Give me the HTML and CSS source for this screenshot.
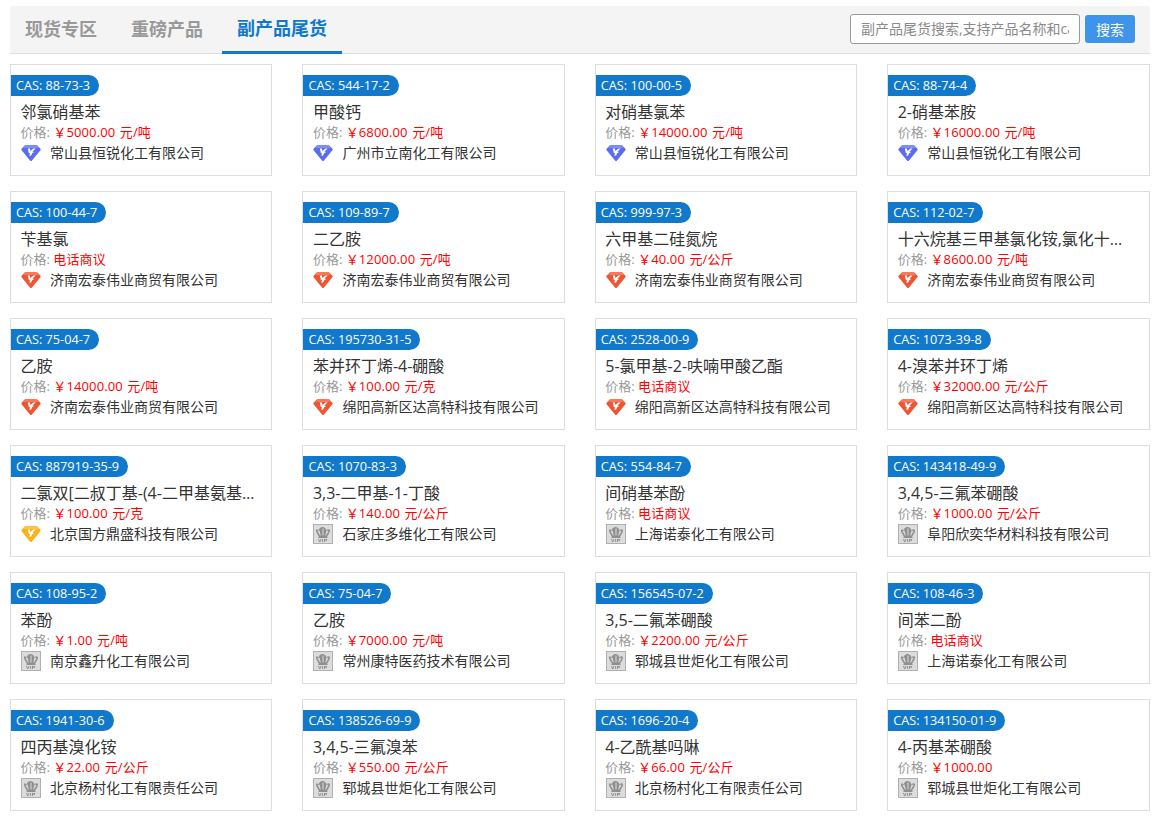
FILE: index.html
```html
<!DOCTYPE html>
<html lang="zh-CN">
<head>
<meta charset="utf-8">
<title>副产品尾货</title>
<link rel="stylesheet" href="styles.css">
</head>
<body>
<svg class="defs" width="0" height="0" aria-hidden="true">
  <symbol id="gem" viewBox="0 0 20 17">
    <path fill="currentColor" d="M4.600 .5h10.800q.6 0 1 .4l3 3.400q.6.8 0 1.500L11 15.900q-1 1-2 0L.6 5.800q-.6-.7 0-1.500l3-3.400q.4-.4 1-.4z"/>
    <path fill="#fff" opacity=".22" d="M4.300 .5h11.400L18 3.500H2z"/>
    <path fill="#fff" d="M6.800 4h2.100l.5 2.600L12.400 4h2.300l-3.300 3 1.900.6-2 .9-1.300 2.700H8.400l.6-2.900-1.100.4z"/>
  </symbol>
  <symbol id="vip" viewBox="0 0 20 20">
    <rect x=".5" y=".5" width="19" height="19" fill="#dcdcdc" stroke="#b0b0b0"/>
    <path fill="#8f8f8f" d="M3.500 5.500q-1.300 1 0 3l2.500 4.500h8l2.500-4.500q1.300-2 0-3-1.500-.8-3 .8-.9-2.800-3.500-3.300h-1q-2.600.5-3.500 3.300-1.500-1.600-3-.8z"/>
    <path fill="#dcdcdc" d="M4.500 7 7 11.500h.8L6.500 6.500zM9.500 4.500h1v7h-1zM15.500 7 13 11.500h-.8l1.300-5z"/>
    <rect x="5.500" y="13" width="9" height="1" fill="#8f8f8f"/>
    <path fill="#8a8a8a" d="M5 15h1l.8 2.200.8-2.200h.9l-1.200 3H6.200zM9.200 15h.9v3h-.9zM11 15h2q1.200 0 1.200 1t-1.200 1h-1.100v1H11zm.9.700v.7h.9q.4 0 .4-.35t-.4-.35z"/>
  </symbol>
</svg>
<main class="page">
  <header class="bar">
    <nav class="tabs">
      <a class="tab">现货专区</a>
      <a class="tab">重磅产品</a>
      <a class="tab active">副产品尾货</a>
    </nav>
    <form class="search">
      <input class="search-input" type="text" placeholder="副产品尾货搜索,支持产品名称和cas">
      <button class="search-btn" type="button">搜索</button>
    </form>
  </header>
  <section class="grid">
    <article class="card"><span class="cas">CAS: 88-73-3</span><h3 class="name">邻氯硝基苯</h3><p class="price">价格: <em>￥5000.00 元/吨</em></p><p class="co"><svg class="ic blue"><use href="#gem"/></svg>常山县恒锐化工有限公司</p></article>
    <article class="card"><span class="cas">CAS: 544-17-2</span><h3 class="name">甲酸钙</h3><p class="price">价格: <em>￥6800.00 元/吨</em></p><p class="co"><svg class="ic blue"><use href="#gem"/></svg>广州市立南化工有限公司</p></article>
    <article class="card"><span class="cas">CAS: 100-00-5</span><h3 class="name">对硝基氯苯</h3><p class="price">价格: <em>￥14000.00 元/吨</em></p><p class="co"><svg class="ic blue"><use href="#gem"/></svg>常山县恒锐化工有限公司</p></article>
    <article class="card"><span class="cas">CAS: 88-74-4</span><h3 class="name">2-硝基苯胺</h3><p class="price">价格: <em>￥16000.00 元/吨</em></p><p class="co"><svg class="ic blue"><use href="#gem"/></svg>常山县恒锐化工有限公司</p></article>

    <article class="card"><span class="cas">CAS: 100-44-7</span><h3 class="name">苄基氯</h3><p class="price">价格: <em>电话商议</em></p><p class="co"><svg class="ic red"><use href="#gem"/></svg>济南宏泰伟业商贸有限公司</p></article>
    <article class="card"><span class="cas">CAS: 109-89-7</span><h3 class="name">二乙胺</h3><p class="price">价格: <em>￥12000.00 元/吨</em></p><p class="co"><svg class="ic red"><use href="#gem"/></svg>济南宏泰伟业商贸有限公司</p></article>
    <article class="card"><span class="cas">CAS: 999-97-3</span><h3 class="name">六甲基二硅氮烷</h3><p class="price">价格: <em>￥40.00 元/公斤</em></p><p class="co"><svg class="ic red"><use href="#gem"/></svg>济南宏泰伟业商贸有限公司</p></article>
    <article class="card"><span class="cas">CAS: 112-02-7</span><h3 class="name">十六烷基三甲基氯化铵,氯化十六烷基三甲基铵</h3><p class="price">价格: <em>￥8600.00 元/吨</em></p><p class="co"><svg class="ic red"><use href="#gem"/></svg>济南宏泰伟业商贸有限公司</p></article>

    <article class="card"><span class="cas">CAS: 75-04-7</span><h3 class="name">乙胺</h3><p class="price">价格: <em>￥14000.00 元/吨</em></p><p class="co"><svg class="ic red"><use href="#gem"/></svg>济南宏泰伟业商贸有限公司</p></article>
    <article class="card"><span class="cas">CAS: 195730-31-5</span><h3 class="name">苯并环丁烯-4-硼酸</h3><p class="price">价格: <em>￥100.00 元/克</em></p><p class="co"><svg class="ic red"><use href="#gem"/></svg>绵阳高新区达高特科技有限公司</p></article>
    <article class="card"><span class="cas">CAS: 2528-00-9</span><h3 class="name">5-氯甲基-2-呋喃甲酸乙酯</h3><p class="price">价格: <em>电话商议</em></p><p class="co"><svg class="ic red"><use href="#gem"/></svg>绵阳高新区达高特科技有限公司</p></article>
    <article class="card"><span class="cas">CAS: 1073-39-8</span><h3 class="name">4-溴苯并环丁烯</h3><p class="price">价格: <em>￥32000.00 元/公斤</em></p><p class="co"><svg class="ic red"><use href="#gem"/></svg>绵阳高新区达高特科技有限公司</p></article>

    <article class="card"><span class="cas">CAS: 887919-35-9</span><h3 class="name">二氯双[二叔丁基-(4-二甲基氨基苯基)膦]氯化钯</h3><p class="price">价格: <em>￥100.00 元/克</em></p><p class="co"><svg class="ic gold"><use href="#gem"/></svg>北京国方鼎盛科技有限公司</p></article>
    <article class="card"><span class="cas">CAS: 1070-83-3</span><h3 class="name">3,3-二甲基-1-丁酸</h3><p class="price">价格: <em>￥140.00 元/公斤</em></p><p class="co"><svg class="ic"><use href="#vip"/></svg>石家庄多维化工有限公司</p></article>
    <article class="card"><span class="cas">CAS: 554-84-7</span><h3 class="name">间硝基苯酚</h3><p class="price">价格: <em>电话商议</em></p><p class="co"><svg class="ic"><use href="#vip"/></svg>上海诺泰化工有限公司</p></article>
    <article class="card"><span class="cas">CAS: 143418-49-9</span><h3 class="name">3,4,5-三氟苯硼酸</h3><p class="price">价格: <em>￥1000.00 元/公斤</em></p><p class="co"><svg class="ic"><use href="#vip"/></svg>阜阳欣奕华材料科技有限公司</p></article>

    <article class="card"><span class="cas">CAS: 108-95-2</span><h3 class="name">苯酚</h3><p class="price">价格: <em>￥1.00 元/吨</em></p><p class="co"><svg class="ic"><use href="#vip"/></svg>南京鑫升化工有限公司</p></article>
    <article class="card"><span class="cas">CAS: 75-04-7</span><h3 class="name">乙胺</h3><p class="price">价格: <em>￥7000.00 元/吨</em></p><p class="co"><svg class="ic"><use href="#vip"/></svg>常州康特医药技术有限公司</p></article>
    <article class="card"><span class="cas">CAS: 156545-07-2</span><h3 class="name">3,5-二氟苯硼酸</h3><p class="price">价格: <em>￥2200.00 元/公斤</em></p><p class="co"><svg class="ic"><use href="#vip"/></svg>郓城县世炬化工有限公司</p></article>
    <article class="card"><span class="cas">CAS: 108-46-3</span><h3 class="name">间苯二酚</h3><p class="price">价格: <em>电话商议</em></p><p class="co"><svg class="ic"><use href="#vip"/></svg>上海诺泰化工有限公司</p></article>

    <article class="card"><span class="cas">CAS: 1941-30-6</span><h3 class="name">四丙基溴化铵</h3><p class="price">价格: <em>￥22.00 元/公斤</em></p><p class="co"><svg class="ic"><use href="#vip"/></svg>北京杨村化工有限责任公司</p></article>
    <article class="card"><span class="cas">CAS: 138526-69-9</span><h3 class="name">3,4,5-三氟溴苯</h3><p class="price">价格: <em>￥550.00 元/公斤</em></p><p class="co"><svg class="ic"><use href="#vip"/></svg>郓城县世炬化工有限公司</p></article>
    <article class="card"><span class="cas">CAS: 1696-20-4</span><h3 class="name">4-乙酰基吗啉</h3><p class="price">价格: <em>￥66.00 元/公斤</em></p><p class="co"><svg class="ic"><use href="#vip"/></svg>北京杨村化工有限责任公司</p></article>
    <article class="card"><span class="cas">CAS: 134150-01-9</span><h3 class="name">4-丙基苯硼酸</h3><p class="price">价格: <em>￥1000.00</em></p><p class="co"><svg class="ic"><use href="#vip"/></svg>郓城县世炬化工有限公司</p></article>
  </section>
</main>
</body>
</html>
```
FILE: styles.css
```css
* { box-sizing: border-box; }
html, body { margin: 0; padding: 0; }
body {
  background: #fff;
  font-family: "Open Sans", "Noto Sans CJK SC", sans-serif;
  color: #333;
  overflow: hidden;
}
.defs { position: absolute; }
.page { padding: 6px 10px 0; }
.bar {
  display: flex;
  justify-content: space-between;
  align-items: center;
  height: 48px;
  background: #f4f4f4;
  border-bottom: 1px solid #ddd;
  padding-right: 15px;
}
.tabs { display: flex; height: 100%; }
.tab {
  display: block;
  width: 106px;
  padding-left: 15px;
  font-size: 18px;
  font-weight: 700;
  line-height: 47px;
  color: #999;
}
.tab.active {
  width: 120px;
  height: 48px;
  color: #1179cb;
  border-bottom: 3px solid #1179cb;
  line-height: 44px;
}
.search { display: flex; align-items: center; gap: 5px; margin-top: -2px; }
.search-input {
  width: 230px;
  height: 30px;
  padding: 0 10px;
  border: 1px solid #999;
  border-radius: 3px;
  background: #fff;
  font: 14px "Open Sans", "Noto Sans CJK SC", sans-serif;
  outline: none;
}
.search-input::placeholder { color: #8a8a8a; opacity: 1; }
.search-btn {
  width: 50px;
  height: 28px;
  padding: 0;
  border: 0;
  border-radius: 3px;
  background: #3e94e8;
  color: #fff;
  font: 14px "Open Sans", "Noto Sans CJK SC", sans-serif;
}
.grid {
  display: grid;
  grid-template-columns: repeat(4, 262.4px);
  grid-auto-rows: 112px;
  gap: 15px 30px;
  margin-top: 10px;
}
.card {
  border: 1px solid #ddd;
  background: #fff;
  padding-top: 10px;
  min-width: 0;
}
.cas {
  display: inline-block;
  height: 21px;
  padding: 0 9px 0 5px;
  border-radius: 0 11px 11px 0;
  background: #1179cb;
  color: #fff;
  font-size: 12.7px;
  line-height: 21px;
  vertical-align: top;
}
.name {
  margin: 3px 12px 0 9.5px;
  font-size: 16px;
  font-weight: 400;
  line-height: 24px;
  color: #333;
  white-space: nowrap;
  overflow: hidden;
  text-overflow: ellipsis;
}
.price {
  margin: 0 10px 0 9.5px;
  font-size: 13px;
  line-height: 16px;
  color: #999;
}
.price em { font-style: normal; color: #f00; word-spacing: 1px; letter-spacing: .12px; }
.co {
  display: flex;
  align-items: center;
  margin: 2px 10px 0;
  font-size: 14px;
  line-height: 22px;
  color: #333;
}
.ic { width: 20px; height: 20px; margin-right: 9px; flex: none; }
.blue { color: #5a6cf0; }
.red { color: #ee5533; }
.gold { color: #fbb117; }
```
